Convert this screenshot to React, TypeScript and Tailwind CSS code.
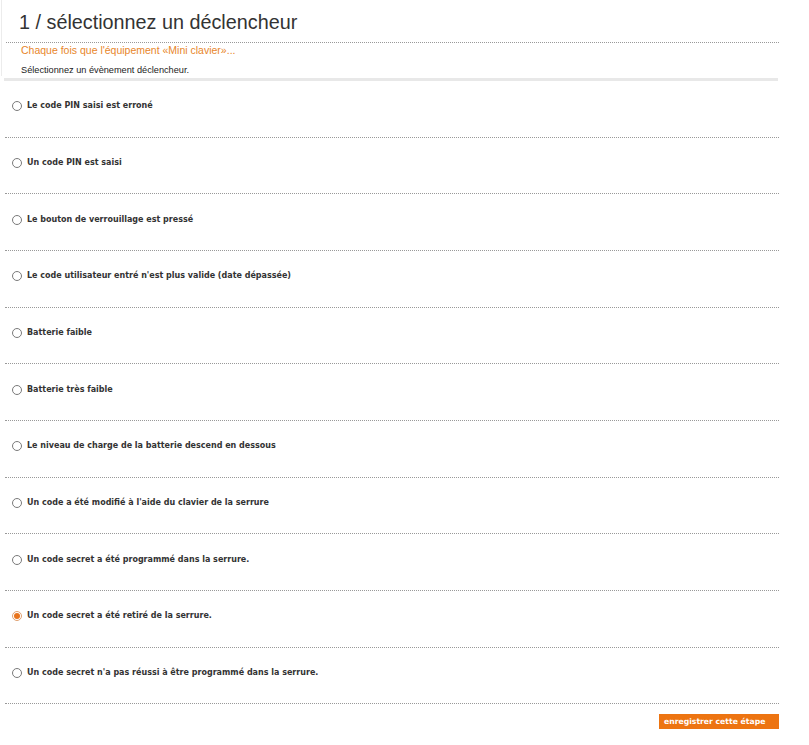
import { useState } from "react";

const triggers = [
  "Le code PIN saisi est erroné",
  "Un code PIN est saisi",
  "Le bouton de verrouillage est pressé",
  "Le code utilisateur entré n'est plus valide (date dépassée)",
  "Batterie faible",
  "Batterie très faible",
  "Le niveau de charge de la batterie descend en dessous",
  "Un code a été modifié à l'aide du clavier de la serrure",
  "Un code secret a été programmé dans la serrure.",
  "Un code secret a été retiré de la serrure.",
  "Un code secret n'a pas réussi à être programmé dans la serrure.",
];

const Radio = ({ checked }: { checked: boolean }) => (
  <span
    className={`w-[10px] h-[10px] rounded-full border flex items-center justify-center shrink-0 bg-white ${
      checked ? "border-[#e0a070]" : "border-[#7a7a7a]"
    }`}
  >
    {checked && <span className="w-[6px] h-[6px] rounded-full bg-[#e8731c]" />}
  </span>
);

const App = () => {
  const [selected, setSelected] = useState(9);

  return (
    <div className="w-[809px] h-[745px] bg-white font-['Liberation_Sans',sans-serif] text-[#333]">
      <div className="w-[775px] ml-[4px]">
        {/* Header */}
        <div className="border-l border-[#ececec] ml-[-3px] pl-[3px]">
          <div className="ml-[1px] pl-[13px] pt-[10px] h-[43px] border-b border-dotted border-[#999] text-[19.8px] leading-[24px] text-[#333]">
            1 / sélectionnez un déclencheur
          </div>
          <div className="pl-[16px] pt-[1px] text-[10.5px] leading-[13px] text-[#e8862a]">
            Chaque fois que l'équipement «Mini clavier»...
          </div>
          <div className="pl-[16px] pt-[7px] text-[9.2px] leading-[12px] text-[#222]">
            Sélectionnez un évènement déclencheur.
          </div>
        </div>
        <div className="mt-[2px] h-[3px] w-[774px] bg-[#e8e8e8]" />

        {/* Trigger list */}
        <div>
          {triggers.map((label, index) => (
            <div
              key={index}
              onClick={() => setSelected(index)}
              className="h-[56.67px] ml-[1px] flex items-center gap-[5px] pl-[7px] pb-[5px] border-b border-dotted border-[#999] cursor-pointer"
            >
              <Radio checked={selected === index} />
              <span className="font-['DejaVu_Sans',sans-serif] font-bold text-[8px] text-[#333]">
                {label}
              </span>
            </div>
          ))}
        </div>

        {/* Footer */}
        <div className="flex justify-end mt-[10px]">
          <button className="w-[120px] h-[15px] bg-[#ed7411] text-white text-left pl-[5px] font-['DejaVu_Sans',sans-serif] font-bold text-[7.7px] leading-[15px]">
            enregistrer cette étape
          </button>
        </div>
      </div>
    </div>
  );
};

export default App;
